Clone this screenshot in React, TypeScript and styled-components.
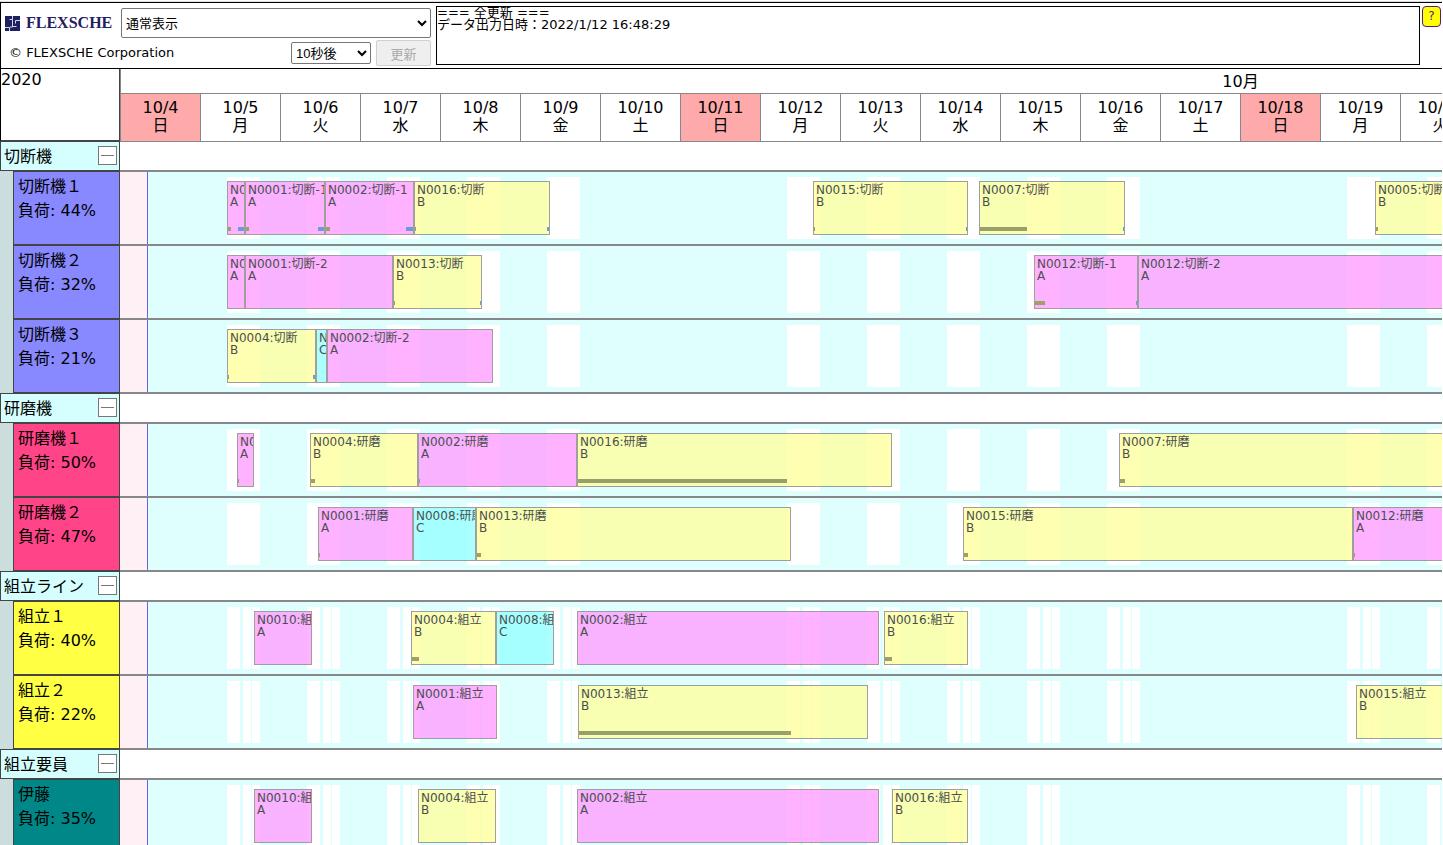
import React from 'react';
import styled, { createGlobalStyle } from 'styled-components';

const GlobalStyle = createGlobalStyle`
  *, *::before, *::after { box-sizing: border-box; }
  html, body { margin: 0; padding: 0; background: #fff; overflow: hidden; }
  body {
    color: #000;
    font-family: "DejaVu Sans", "Noto Sans CJK JP", sans-serif;
    font-size: 16px;
  }
`;

const LABEL_WIDTH = 120;
const DAY_WIDTH = 80;
const MONTH_DAYS = 28;

const Page = styled.div`
  display: flex;
  flex-direction: column;
  height: 100vh;
  padding: 2px 1px 0 0;
  overflow: hidden;
`;

const TopBar = styled.header`
  display: flex;
  flex: none;
  gap: 5px;
  height: 67px;
  padding: 3px 1px 3px 0;
  border: 1px solid #000;
  border-right: 0;
  box-shadow: 0 -1px 0 #ddd;
`;

const Controls = styled.div`
  display: flex;
  flex-direction: column;
  gap: 2px;
  width: 430px;
  padding-top: 2px;
`;

const ControlRow = styled.div`
  display: flex;
  align-items: center;
  gap: 5px;
`;

const Brand = styled.a`
  display: flex;
  align-items: center;
  gap: 6px;
  flex: 1;
  padding-left: 4px;
  color: #1f2060;
  font: bold 16px/20px "Liberation Serif", serif;
  text-decoration: none;
`;

const Copyright = styled.span`
  flex: 1;
  padding-left: 8px;
  font-size: 13px;
  line-height: 20px;
`;

const Select = styled.select<{ $width: number; $height: number }>`
  width: ${(p) => p.$width}px;
  height: ${(p) => p.$height}px;
  border: 1px solid #767676;
  border-radius: 2px;
  background: #fff;
  color: #000;
  font-family: "Liberation Sans", "Noto Sans CJK JP", sans-serif;
  font-size: 13px;
`;

const RefreshButton = styled.button`
  width: 55px;
  height: 26px;
  padding: 0;
  border: 1px solid #d0d0d0;
  border-radius: 2px;
  background: #efefef;
  color: #aaa;
  font-family: "Liberation Sans", "Noto Sans CJK JP", sans-serif;
  font-size: 13px;
`;

const Log = styled.div`
  flex: 1;
  height: 59px;
  border: 1px solid #000;
  font-size: 13px;
  line-height: 12px;
  white-space: pre;
  overflow: hidden;
`;

const HelpLink = styled.a`
  width: 19px;
  height: 21px;
  margin-left: -3px;
  border: 1px solid #551a8b;
  border-radius: 4px;
  background: #ff0;
  color: #551a8b;
  font-size: 12px;
  line-height: 19px;
  text-align: center;
  text-decoration: none;
`;

const Chart = styled.main`
  display: flex;
  flex: 1;
  min-height: 0;
  overflow: hidden;
`;

const Side = styled.div`
  flex: none;
  width: ${LABEL_WIDTH}px;
  background: #ccdddd;
`;

const Corner = styled.div`
  height: 72px;
  border: 1px solid #444;
  border-top: 0;
  border-left-color: #000;
  background: #fff;
  line-height: 22px;
`;

const GroupLabel = styled.div`
  display: flex;
  justify-content: space-between;
  height: 30px;
  padding: 3px 2px 0 3px;
  border: 1px solid #444;
  background: #d5ffff;
  line-height: 24px;
`;

const Toggle = styled.button`
  display: flex;
  align-items: center;
  justify-content: center;
  width: 19px;
  height: 19px;
  margin-top: 1px;
  padding: 0;
  border: 1px solid #777;
  background: #fff;
`;

const Dash = styled.span`
  width: 13px;
  height: 1px;
  background: #777;
`;

const ResourceLabel = styled.div<{ $color: string }>`
  height: 74px;
  margin-left: 13px;
  padding: 3px 4px;
  border: 1px solid #444;
  background: ${(p) => p.$color};
  line-height: 24px;
`;

const Timeline = styled.div`
  flex: 1;
  min-width: 0;
  overflow: hidden;
`;

const Canvas = styled.div`
  width: ${MONTH_DAYS * DAY_WIDTH}px;
`;

const Month = styled.div`
  height: 25px;
  border-left: 1px solid #888;
  border-bottom: 1px solid #888;
  line-height: 26px;
  text-align: center;
`;

const Days = styled.div`
  display: flex;
  height: 48px;
  border-bottom: 1px solid #888;
`;

const Day = styled.div<{ $holiday: boolean }>`
  flex: none;
  width: ${DAY_WIDTH}px;
  padding-top: 5px;
  border-left: 1px solid #888;
  background: ${(p) => (p.$holiday ? '#ffaaaa' : '#fff')};
  line-height: 18px;
  text-align: center;
`;

const GroupTrack = styled.div`
  height: 30px;
  border-bottom: 2px solid #888;
`;

const Track = styled.div`
  position: relative;
  height: 74px;
  border-bottom: 2px solid #888;
  background: #dfffff;
  overflow: hidden;
`;

const Past = styled.div`
  width: 28px;
  height: 100%;
  border-right: 1px solid #6666dd;
  background: #fff0f5;
`;

const Shift = styled.div`
  position: absolute;
  top: 5px;
  height: 62px;
  background: #fff;
`;

const Bar = styled.div<{ $color: string }>`
  position: absolute;
  top: 9px;
  height: 54px;
  padding: 2px 0 0 2px;
  border: 1px solid #888;
  background: ${(p) => p.$color};
  color: #222;
  font-size: 12px;
  line-height: 12px;
  white-space: pre;
  opacity: 0.8;
  overflow: hidden;
`;

const Mark = styled.div<{ $side: 'left' | 'right' }>`
  position: absolute;
  top: 45px;
  ${(p) => p.$side}: 0;
  height: 4px;
  background: ${(p) => (p.$side === 'left' ? '#888844' : '#4488cc')};
`;

type Product = 'A' | 'B' | 'C';
type Task = {
  name: string;
  product: Product;
  from: number;
  to: number;
  setup?: number;
  teardown?: number;
};
type Resource = { name: string; load: number; off?: number[]; tasks: Task[] };
type Group = { name: string; color: string; shifts: [number, number][]; resources: Resource[] };

const productColors: Record<Product, string> = { A: '#ff9fff', B: '#ffff9f', C: '#99ffff' };

const task = (
  name: string,
  product: Product,
  from: number,
  to: number,
  setup = 0,
  teardown = 0,
): Task => ({ name, product, from, to, setup, teardown });

const machineShifts: [number, number][] = [[27, 33]];
const assemblyShifts: [number, number][] = [[27, 13], [43, 8], [52, 8]];

const groups: Group[] = [
  {
    name: '切断機',
    color: '#8888ff',
    shifts: machineShifts,
    resources: [
      {
        name: '切断機１',
        load: 44,
        tasks: [
          task('N0010:切断-1', 'A', 107, 125, 3, 6),
          task('N0001:切断-1', 'A', 125, 205, 3, 6),
          task('N0002:切断-1', 'A', 205, 294, 4, 7),
          task('N0016:切断', 'B', 294, 430, 1, 2),
          task('N0015:切断', 'B', 693, 848, 1, 1),
          task('N0007:切断', 'B', 859, 1005, 47, 1),
          task('N0005:切断', 'B', 1255, 1400, 2),
        ],
      },
      {
        name: '切断機２',
        load: 32,
        tasks: [
          task('N0010:切断-2', 'A', 107, 125),
          task('N0001:切断-2', 'A', 125, 273),
          task('N0013:切断', 'B', 273, 362, 1, 1),
          task('N0012:切断-1', 'A', 914, 1018, 10, 1),
          task('N0012:切断-2', 'A', 1018, 1400),
        ],
      },
      {
        name: '切断機３',
        load: 21,
        tasks: [
          task('N0004:切断', 'B', 107, 196, 1, 2),
          task('N0008:切断', 'C', 196, 207),
          task('N0002:切断-2', 'A', 207, 373),
        ],
      },
    ],
  },
  {
    name: '研磨機',
    color: '#ff4488',
    shifts: machineShifts,
    resources: [
      {
        name: '研磨機１',
        load: 50,
        tasks: [
          task('N0010:研磨', 'A', 117, 134, 1),
          task('N0004:研磨', 'B', 190, 298, 4),
          task('N0002:研磨', 'A', 298, 457, 1),
          task('N0016:研磨', 'B', 457, 772, 209),
          task('N0007:研磨', 'B', 999, 1400, 5),
        ],
      },
      {
        name: '研磨機２',
        load: 47,
        tasks: [
          task('N0001:研磨', 'A', 198, 293, 1),
          task('N0008:研磨', 'C', 293, 356),
          task('N0013:研磨', 'B', 356, 671, 4),
          task('N0015:研磨', 'B', 843, 1233, 4),
          task('N0012:研磨', 'A', 1233, 1400, 1),
        ],
      },
    ],
  },
  {
    name: '組立ライン',
    color: '#ffff44',
    shifts: assemblyShifts,
    resources: [
      {
        name: '組立１',
        load: 40,
        tasks: [
          task('N0010:組立', 'A', 134, 192),
          task('N0004:組立', 'B', 291, 376, 7),
          task('N0008:組立', 'C', 376, 434),
          task('N0002:組立', 'A', 457, 759),
          task('N0016:組立', 'B', 764, 848, 7),
        ],
      },
      {
        name: '組立２',
        load: 22,
        tasks: [
          task('N0001:組立', 'A', 293, 377),
          task('N0013:組立', 'B', 458, 748, 212),
          task('N0015:組立', 'B', 1236, 1400),
        ],
      },
    ],
  },
  {
    name: '組立要員',
    color: '#008888',
    shifts: assemblyShifts,
    resources: [
      {
        name: '伊藤',
        load: 35,
        off: [12],
        tasks: [
          task('N0010:組立', 'A', 134, 192),
          task('N0004:組立', 'B', 298, 376),
          task('N0002:組立', 'A', 457, 759),
          task('N0016:組立', 'B', 772, 848),
        ],
      },
    ],
  },
];

const weekdays = ['日', '月', '火', '水', '木', '金', '土'];
const days = Array.from({ length: 17 }, (_, i) => ({
  index: i,
  date: `10/${i + 4}`,
  weekday: weekdays[i % 7],
}));
const isWorkday = (index: number) => index % 7 !== 0 && index % 7 !== 6;

function LogoMark() {
  return (
    <svg width="15" height="15" viewBox="0 0 15 15" aria-hidden="true">
      <rect width="15" height="15" fill="#1f2060" />
      <path
        d="M4.5 15V11.5H0M4.500 3.500H7.500V11H5M7.500 3.500V0M15 4.500H10.500V7.500M7.500 10.500H11.500"
        fill="none"
        stroke="#d8d8ea"
        strokeWidth="1"
      />
    </svg>
  );
}

function ResourceTrack({ group, resource }: { group: Group; resource: Resource }) {
  const open = days.filter((d) => isWorkday(d.index) && !resource.off?.includes(d.index));
  return (
    <Track>
      <Past />
      {open.flatMap((d) =>
        group.shifts.map(([start, length]) => (
          <Shift
            key={`${d.index}-${start}`}
            style={{ left: d.index * DAY_WIDTH + start, width: length }}
          />
        )),
      )}
      {resource.tasks.map((t) => (
        <Bar
          key={t.from}
          $color={productColors[t.product]}
          style={{ left: t.from, width: t.to - t.from }}
        >
          {`${t.name}\n${t.product}`}
          {t.setup ? <Mark $side="left" style={{ width: t.setup }} /> : null}
          {t.teardown ? <Mark $side="right" style={{ width: t.teardown }} /> : null}
        </Bar>
      ))}
    </Track>
  );
}

export default function App() {
  return (
    <Page>
      <GlobalStyle />
      <TopBar>
        <Controls>
          <ControlRow>
            <Brand href="#">
              <LogoMark />
              FLEXSCHE
            </Brand>
            <Select $width={310} $height={30} aria-label="表示">
              <option>通常表示</option>
            </Select>
          </ControlRow>
          <ControlRow>
            <Copyright>© FLEXSCHE Corporation</Copyright>
            <Select $width={80} $height={22} aria-label="更新間隔">
              <option>10秒後</option>
            </Select>
            <RefreshButton disabled>更新</RefreshButton>
          </ControlRow>
        </Controls>
        <Log role="log">{'=== 全更新 ===\nデータ出力日時：2022/1/12 16:48:29'}</Log>
        <HelpLink href="#">?</HelpLink>
      </TopBar>
      <Chart>
        <Side>
          <Corner>2020</Corner>
          {groups.map((g) => (
            <React.Fragment key={g.name}>
              <GroupLabel>
                {g.name}
                <Toggle aria-label={`${g.name}を閉じる`}>
                  <Dash />
                </Toggle>
              </GroupLabel>
              {g.resources.map((r) => (
                <ResourceLabel key={r.name} $color={g.color}>
                  <div>{r.name}</div>
                  <div>負荷: {r.load}%</div>
                </ResourceLabel>
              ))}
            </React.Fragment>
          ))}
        </Side>
        <Timeline>
          <Canvas>
            <Month>10月</Month>
            <Days>
              {days.map((d) => (
                <Day key={d.date} $holiday={d.index % 7 === 0}>
                  <div>{d.date}</div>
                  <div>{d.weekday}</div>
                </Day>
              ))}
            </Days>
            {groups.map((g) => (
              <React.Fragment key={g.name}>
                <GroupTrack />
                {g.resources.map((r) => (
                  <ResourceTrack key={r.name} group={g} resource={r} />
                ))}
              </React.Fragment>
            ))}
          </Canvas>
        </Timeline>
      </Chart>
    </Page>
  );
}
